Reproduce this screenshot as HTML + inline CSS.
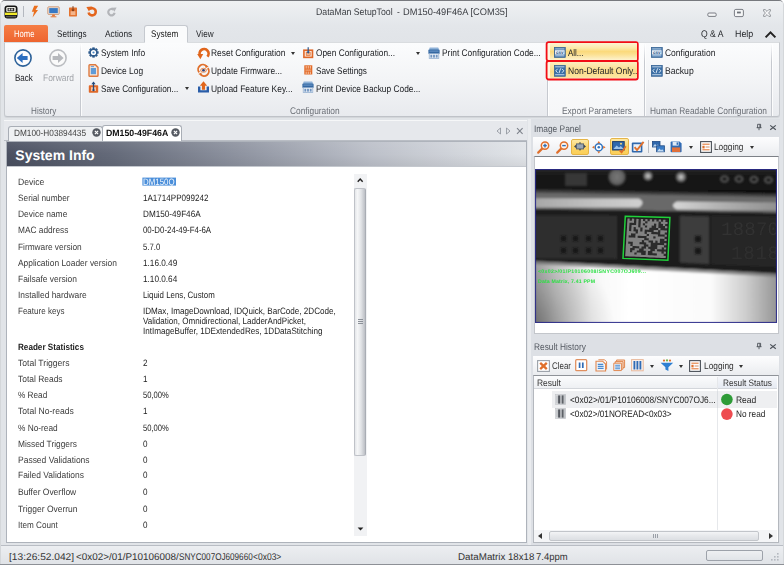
<!DOCTYPE html>
<html>
<head>
<meta charset="utf-8">
<title>DataMan SetupTool - DM150-49F46A [COM35]</title>
<style>
html,body{margin:0;padding:0;}
body{width:784px;height:565px;overflow:hidden;background:#fff;font-family:"Liberation Sans",sans-serif;font-size:10px;color:#333;position:relative;text-rendering:geometricPrecision;}
.abs{position:absolute;}
.t{position:absolute;white-space:nowrap;line-height:12px;transform-origin:0 0;}
.arr{position:absolute;width:0;height:0;border-left:2.5px solid transparent;border-right:2.5px solid transparent;border-top:3px solid #333;}
.sep{position:absolute;top:44px;width:1px;height:72px;background:linear-gradient(rgba(198,201,207,0),#c6c9cf 25%,#c6c9cf 100%);box-shadow:1px 0 0 rgba(255,255,255,.8);}
.hl{box-sizing:border-box;border:1.5px solid #e8141c;background:linear-gradient(#fdf3cf,#fbe08e 45%,#fad56c 55%,#fce9a8);border-radius:1px;}
.dtab{border:1px solid #a9aeb6;border-bottom:none;border-radius:3px 3px 0 0;box-sizing:border-box;}
svg{position:absolute;overflow:visible;}
</style>
</head>
<body>
<div class="abs" style="left:0px;top:0px;width:784px;height:565px;background:#e1e4e8;border-radius:5px 5px 0 0;box-sizing:border-box;border:1px solid #d4d7da;border-top:1px solid #77797e;border-bottom:none;"></div>
<div class="abs" style="left:1px;top:1px;width:782px;height:42px;background:linear-gradient(#eff1f3,#e3e6ea 60%,#e1e4e8);border-radius:4px 4px 0 0;"></div>

<svg class="abs" style="left:4px;top:5px" width="14" height="14" viewBox="0 0 14 14"><rect x=".5" y=".5" width="13" height="13" rx="3" fill="#141414"/><rect x="2.2" y="2" width="9.6" height="5" rx="1.2" fill="#e9e9e2"/><rect x="3.6" y="3" width="6.6" height="3.2" fill="#2a2a2a"/><rect x="4.6" y="3.6" width="1.6" height="1.8" fill="#ddd"/><rect x="7.2" y="3.6" width="1.6" height="1.8" fill="#ddd"/><rect x="1" y="7.6" width="12" height="2.4" fill="#f2ea2a"/><rect x="2" y="10.8" width="10" height="1.6" fill="#5a5a52"/></svg>
<div class="abs" style="left:23px;top:6px;width:1px;height:11px;background:#b4b8bf;"></div>
<svg class="abs" style="left:30px;top:5px" width="10" height="13" viewBox="0 0 10 13"><path d="M4.2 .8 L8.2 .8 L5.6 5 L8 5 L2.6 12.4 L4 6.8 L1.8 6.8 Z" fill="#e96f1e"/></svg>
<svg class="abs" style="left:47px;top:6px" width="13" height="12" viewBox="0 0 13 12"><rect x=".8" y=".8" width="11.4" height="7.6" rx=".8" fill="#eadfd6" stroke="#c98a62" stroke-width=".8"/><rect x="2.2" y="2.1" width="8.6" height="5" fill="#3779c4"/><path d="M5.4 8.6 H7.6 L8.2 10.4 H4.8 Z" fill="#e57a3a"/><rect x="3.6" y="10.3" width="5.8" height="1" fill="#e57a3a"/></svg>
<svg class="abs" style="left:68px;top:6px" width="10" height="11" viewBox="0 0 10 11"><rect x="1" y="1.4" width="8" height="9" rx=".6" fill="#e4732f"/><rect x="2.6" y="5.2" width="4.8" height="3.8" fill="#f3b58c"/><path d="M5 .2 V5" stroke="#7a3a18" stroke-width="1"/><path d="M3.4 3.4 L5 5.4 L6.6 3.4 Z" fill="#7a3a18"/></svg>
<svg class="abs" style="left:86px;top:6px" width="12" height="11" viewBox="0 0 12 11"><path d="M3.6 3.2 A3.6 3.6 0 1 1 2.6 6.4" fill="none" stroke="#e4651c" stroke-width="2.6"/><path d="M.4 1 L5.8 .6 L3 5.4 Z" fill="#e4651c"/></svg>
<svg class="abs" style="left:106px;top:7px" width="11" height="10" viewBox="0 0 11 10"><path d="M7.6 2.8 A3.2 3.2 0 1 0 8.6 5.8" fill="none" stroke="#b3b5b9" stroke-width="2.2"/><path d="M10.6 .6 L5.8 .8 L8.4 4.8 Z" fill="#b3b5b9"/></svg>
<!-- window buttons -->
<svg class="abs" style="left:704px;top:6px" width="72" height="14" viewBox="0 0 72 14"><rect x="3.8" y="7" width="8.4" height="3.4" rx="1.2" fill="#f4f5f6" stroke="#6d7178" stroke-width=".9"/><rect x="30.4" y="3.4" width="9" height="7.2" rx="1.4" fill="#f4f5f6" stroke="#6d7178" stroke-width=".9"/><rect x="33" y="5.6" width="3.8" height="1.8" fill="#6d7178"/><path d="M59.6 3.6 L61.2 3.6 L63 5.4 L64.8 3.6 L66.4 3.6 L66.4 5 L64.6 7 L66.4 9 L66.4 10.4 L64.8 10.4 L63 8.6 L61.2 10.4 L59.6 10.4 L59.6 9 L61.4 7 L59.6 5 Z" fill="#f4f5f6" stroke="#7d8188" stroke-width=".8"/></svg>
<svg class="abs" style="left:764px;top:30px" width="13" height="9" viewBox="0 0 13 9"><path d="M1.6 7.4 L6.5 2.4 L11.4 7.4" fill="none" stroke="#222" stroke-width="2"/></svg>


<div class="t " style="left:316.0px;top:7.2px;font-size:9.6px;color:#3a3d42;transform:scaleX(0.909);">DataMan SetupTool</div>
<div class="t " style="left:396.8px;top:7.2px;font-size:9.6px;color:#3a3d42;transform:scaleX(0.876);">-</div>
<div class="t " style="left:403.0px;top:7.2px;font-size:9.6px;color:#3a3d42;transform:scaleX(0.966);">DM150-49F46A [COM35]</div>
<div class="abs" style="left:4px;top:25px;width:44px;height:17px;background:linear-gradient(#f57d45,#ee6530);border-radius:2px 2px 0 0;"></div>
<div class="t " style="left:14.0px;top:28.6px;font-size:9.6px;color:#fff;transform:scaleX(0.797);">Home</div>
<div class="t " style="left:57.2px;top:28.6px;font-size:9.6px;color:#26282c;transform:scaleX(0.853);">Settings</div>
<div class="t " style="left:105.4px;top:28.6px;font-size:9.6px;color:#26282c;transform:scaleX(0.867);">Actions</div>
<div class="abs" style="left:144px;top:25px;width:44px;height:18px;background:#fafbfc;border:1px solid #c5c9cf;border-bottom:none;border-radius:3px 3px 0 0;box-sizing:border-box;"></div>
<div class="t " style="left:151.3px;top:28.6px;font-size:9.6px;color:#222;transform:scaleX(0.853);">System</div>
<div class="t " style="left:196.4px;top:28.6px;font-size:9.6px;color:#26282c;transform:scaleX(0.853);">View</div>
<div class="t " style="left:701.3px;top:28.6px;font-size:9.6px;color:#26282c;transform:scaleX(0.897);">Q &amp; A</div>
<div class="t " style="left:735.3px;top:28.6px;font-size:9.6px;color:#26282c;transform:scaleX(0.927);">Help</div>
<div class="abs" style="left:4px;top:42px;width:776px;height:75px;background:linear-gradient(#fbfcfd 0,#f3f4f6 50%,#e8eaee 100%);border:1px solid #c6c9ce;border-top:1px solid #d9dcdf;border-bottom:1px solid #bfc2c8;box-sizing:border-box;border-radius:0 0 3px 3px;box-shadow:0 1px 0 #d3d6da;"></div>
<div class="abs" style="left:145px;top:42px;width:42px;height:1px;background:#fafbfc;"></div>
<svg style="left:12.9px;top:48.4px" width="20" height="20" viewBox="0 0 20 20"><circle cx="10" cy="10" r="8.1" fill="#fdfdfe" stroke="#2c6199" stroke-width="1.6"/><path d="M3.8 10 L9.6 5 L9.6 8 L14.6 8 L14.6 12 L9.6 12 L9.6 15 Z" fill="#2d6fc0"/></svg>
<svg style="left:47.5px;top:48.4px" width="20" height="20" viewBox="0 0 20 20"><circle cx="10" cy="10" r="8.1" fill="#fafafa" stroke="#bbbdc1" stroke-width="1.6"/><path d="M15.6 10 L10 5 L10 8 L4.6 8 L4.6 12 L10 12 L10 15 Z" fill="#b7b9bd"/></svg>
<div class="t " style="left:15.0px;top:73.4px;font-size:9.6px;color:#202226;transform:scaleX(0.834);">Back</div>
<div class="t " style="left:43.4px;top:73.4px;font-size:9.6px;color:#a0a3a8;transform:scaleX(0.881);">Forward</div>
<div class="t " style="left:30.6px;top:105.9px;font-size:9.6px;color:#6a6e75;transform:scaleX(0.850);">History</div>
<div class="sep" style="left:80px;"></div>
<div class="t " style="left:101.3px;top:48.4px;font-size:9.6px;color:#202226;transform:scaleX(0.870);">System Info</div>
<div class="t " style="left:101.3px;top:66.4px;font-size:9.6px;color:#202226;transform:scaleX(0.877);">Device Log</div>
<div class="t " style="left:101.3px;top:83.6px;font-size:9.6px;color:#202226;transform:scaleX(0.862);">Save Configuration...</div>
<div class="arr" style="left:185px;top:87px;border-top-color:#333;"></div>
<div class="t " style="left:211.2px;top:48.4px;font-size:9.6px;color:#202226;transform:scaleX(0.878);">Reset Configuration</div>
<div class="arr" style="left:291px;top:52px;border-top-color:#333;"></div>
<div class="t " style="left:211.2px;top:66.4px;font-size:9.6px;color:#202226;transform:scaleX(0.871);">Update Firmware...</div>
<div class="t " style="left:211.2px;top:83.6px;font-size:9.6px;color:#202226;transform:scaleX(0.881);">Upload Feature Key...</div>
<div class="t " style="left:316.3px;top:48.4px;font-size:9.6px;color:#202226;transform:scaleX(0.866);">Open Configuration...</div>
<div class="arr" style="left:416px;top:52px;border-top-color:#333;"></div>
<div class="t " style="left:316.3px;top:66.4px;font-size:9.6px;color:#202226;transform:scaleX(0.861);">Save Settings</div>
<div class="t " style="left:316.3px;top:83.6px;font-size:9.6px;color:#202226;transform:scaleX(0.870);">Print Device Backup Code...</div>
<div class="t " style="left:442.0px;top:48.4px;font-size:9.6px;color:#202226;transform:scaleX(0.873);">Print Configuration Code...</div>
<div class="t " style="left:289.5px;top:105.9px;font-size:9.6px;color:#6a6e75;transform:scaleX(0.870);">Configuration</div>
<div class="abs" style="left:547.5px;top:43px;width:96.5px;height:73px;background:linear-gradient(rgba(255,255,255,.5),rgba(255,255,255,.6));"></div>
<div class="sep" style="left:546.5px;"></div>
<svg style="left:545px;top:40px" width="96" height="42" viewBox="0 0 96 42"><rect x="1.6" y="2.1" width="91.2" height="18.9" rx="2" fill="#fef7e0" stroke="#f20d16" stroke-width="1.8"/><rect x="1.6" y="21" width="91.2" height="18.5" rx="2" fill="#fef7e0" stroke="#f20d16" stroke-width="1.8"/></svg>
<div class="abs" style="left:549.8px;top:43.4px;width:87.2px;height:16.4px;background:linear-gradient(#fdf4d3 0,#fce9a9 30%,#fbda7c 50%,#fbdf8e 65%,#fdf2cd 100%);border-radius:1px;"></div>
<div class="abs" style="left:549.8px;top:62.2px;width:87.2px;height:16.2px;background:linear-gradient(#fdefc0 0,#fbe29a 40%,#fbdc88 60%,#fce6a6 100%);border-radius:1px;"></div>
<div class="t " style="left:567.5px;top:48.4px;font-size:9.6px;color:#202226;transform:scaleX(0.830);">All...</div>
<div class="t " style="left:567.5px;top:66.4px;font-size:9.6px;color:#202226;transform:scaleX(0.888);">Non-Default Only..</div>
<div class="t " style="left:562.0px;top:105.9px;font-size:9.6px;color:#6a6e75;transform:scaleX(0.875);">Export Parameters</div>
<div class="sep" style="left:644px;"></div>
<div class="sep" style="left:771px;"></div>
<div class="t " style="left:665.0px;top:48.4px;font-size:9.6px;color:#202226;transform:scaleX(0.883);">Configuration</div>
<div class="t " style="left:665.0px;top:66.4px;font-size:9.6px;color:#202226;transform:scaleX(0.896);">Backup</div>
<div class="t " style="left:650.0px;top:105.9px;font-size:9.6px;color:#6a6e75;transform:scaleX(0.870);">Human Readable Configuration</div>
<svg style="left:87.8px;top:47px" width="11" height="11" viewBox="0 0 12 12"><g transform="translate(6 6)"><g fill="#2d5a8c"><rect x="-1.3" y="-5.6" width="2.6" height="2.6" transform="rotate(0)" /><rect x="-1.3" y="-5.6" width="2.6" height="2.6" transform="rotate(45)" /><rect x="-1.3" y="-5.6" width="2.6" height="2.6" transform="rotate(90)" /><rect x="-1.3" y="-5.6" width="2.6" height="2.6" transform="rotate(135)" /><rect x="-1.3" y="-5.6" width="2.6" height="2.6" transform="rotate(180)" /><rect x="-1.3" y="-5.6" width="2.6" height="2.6" transform="rotate(225)" /><rect x="-1.3" y="-5.6" width="2.6" height="2.6" transform="rotate(270)" /><rect x="-1.3" y="-5.6" width="2.6" height="2.6" transform="rotate(315)" /></g><circle r="3.7" fill="#fff" stroke="#2d5a8c" stroke-width="1.7"/><circle r="1.2" fill="#4b86c4"/></g></svg>
<svg style="left:87.6px;top:63.8px" width="11" height="13" viewBox="0 0 11 13"><path d="M1 1.6 Q1 .8 1.8 .8 H7.4 L10 3.4 V11.4 Q10 12.2 9.2 12.2 H1.8 Q1 12.2 1 11.4 Z" fill="#f6e4d8" stroke="#dd7a40" stroke-width="1.4"/><rect x="2.8" y="4" width="5.2" height="6.2" fill="#5f9bd8"/><path d="M2.8 2.6 H6" stroke="#5f9bd8" stroke-width="1"/></svg>
<svg style="left:87.6px;top:81.2px" width="11" height="12.5" viewBox="0 0 11 12.5"><rect x=".8" y="4.2" width="9.4" height="7.6" rx=".8" fill="#e0692a"/><rect x="3" y="6.2" width="5" height="3.8" fill="#f5c4a4"/><path d="M5.5 1.6 V9.4" stroke="#24487a" stroke-width="1.3"/><path d="M3.4 3.2 L5.5 .4 L7.6 3.2 Z" fill="#24487a"/><circle cx="5.5" cy="9.2" r="1.1" fill="#24487a"/></svg>
<svg style="left:197px;top:46.6px" width="13" height="12.6" viewBox="0 0 13 12.6"><path d="M3.2 8.8 A4.5 4.5 0 1 1 10.4 9.6" fill="none" stroke="#e0651c" stroke-width="2.7" stroke-linecap="butt"/><path d="M.2 7 L6.2 7 L3.4 12.2 Z" fill="#e0651c"/></svg>
<svg style="left:197px;top:64px" width="13" height="12.5" viewBox="0 0 13 12.5"><path d="M2.2 8.4 A4.7 4.7 0 0 1 9.6 2.4" fill="none" stroke="#e0702c" stroke-width="1.9"/><path d="M10.8 4.2 A4.7 4.7 0 0 1 3.4 10.2" fill="none" stroke="#e0702c" stroke-width="1.9"/><path d="M8.4 .8 L11.6 2.6 L8.6 4.2 Z" fill="#e0702c"/><path d="M4.6 11.8 L1.4 10 L4.4 8.4 Z" fill="#e0702c"/><ellipse cx="6.5" cy="6.3" rx="3" ry="2" fill="#f3d9c6" stroke="#e0702c" stroke-width=".7"/><circle cx="6.5" cy="6.3" r="1.3" fill="#2c3f7a"/></svg>
<svg style="left:198px;top:81.4px" width="11" height="11.6" viewBox="0 0 11 11.6"><path d="M1.2 5.6 V10.4 H9.8 V5.6" fill="none" stroke="#2a5da8" stroke-width="2.4"/><path d="M5.5 8.8 V3.6" stroke="#e0651c" stroke-width="3.2"/><path d="M1.8 4.8 L5.5 .2 L9.2 4.8 Z" fill="#e0651c"/></svg>
<svg style="left:303.2px;top:46.6px" width="10.4" height="11.2" viewBox="0 0 10.4 11.2"><rect x=".9" y="3.2" width="8.6" height="7.2" fill="#f8e6da" stroke="#e0692a" stroke-width="1.6"/><rect x="3.2" y="5.4" width="4" height="3.2" fill="#f1b48e" stroke="#e0692a" stroke-width=".6"/><path d="M5.2 .2 V6" stroke="#2b568c" stroke-width="1.2"/><path d="M3.6 4.6 L5.2 6.8 L6.8 4.6 Z" fill="#2b568c"/></svg>
<svg style="left:303.6px;top:65.2px" width="8.6" height="9.8" viewBox="0 0 8.6 9.8"><rect x=".3" y=".3" width="8" height="9.2" fill="#e26a28"/><g fill="#f3b48e"><rect x="1.6" y="1" width="1.2" height="2.6"/><rect x="3.7" y="1" width="1.2" height="2.6"/><rect x="5.8" y="1" width="1.2" height="2.6"/><rect x="1.4" y="4.6" width="5.8" height="1"/><rect x="1.6" y="6.6" width="1.2" height="2.4"/><rect x="3.7" y="6.6" width="1.2" height="2.4"/><rect x="5.8" y="6.6" width="1.2" height="2.4"/></g></svg>
<svg style="left:302.4px;top:81.4px" width="12" height="12" viewBox="0 0 12 12"><rect x="1.4" y=".6" width="9.2" height="3" rx=".6" fill="#8fb2d8"/><rect x=".4" y="2.6" width="11.2" height="4.4" rx=".8" fill="#3568a2"/><rect x="1.4" y="3.6" width="9.2" height="1" fill="#6f9bcc"/><rect x="1.2" y="6.6" width="9.6" height="5" fill="#e9eff6" stroke="#8aa8cc" stroke-width=".7"/><g fill="#6f93c0"><rect x="2.4" y="7.8" width="1.8" height="2.8"/><rect x="5.1" y="7.8" width="1.8" height="2.8"/><rect x="7.8" y="7.8" width="1.8" height="2.8"/></g></svg>
<svg style="left:427.6px;top:46.6px" width="12" height="12" viewBox="0 0 12 12"><rect x="1.4" y=".6" width="9.2" height="3" rx=".6" fill="#8fb2d8"/><rect x=".4" y="2.6" width="11.2" height="4.4" rx=".8" fill="#3568a2"/><rect x="1.4" y="3.6" width="9.2" height="1" fill="#6f9bcc"/><rect x="1.2" y="6.6" width="9.6" height="5" fill="#e9eff6" stroke="#8aa8cc" stroke-width=".7"/><g fill="#6f93c0"><rect x="2.4" y="7.8" width="1.8" height="2.8"/><rect x="5.1" y="7.8" width="1.8" height="2.8"/><rect x="7.8" y="7.8" width="1.8" height="2.8"/></g></svg>
<svg style="left:553.5px;top:47.3px" width="11.6" height="10.8" viewBox="0 0 11.6 10.8"><rect x=".3" y=".3" width="11" height="10.2" fill="#3a6ea5" stroke="#2c5a8c" stroke-width=".6"/><rect x="1.2" y="1.5" width="9.2" height=".9" fill="#cfe0f0"/><rect x="1.2" y="8.4" width="9.2" height=".9" fill="#cfe0f0"/><rect x="1" y="3.2" width="9.6" height="4.4" fill="#e6eef7"/><text x="5.8" y="7" font-family="Liberation Sans, sans-serif" font-size="4.6" font-weight="bold" fill="#2c5a8c" text-anchor="middle">csv</text></svg>
<svg style="left:553.5px;top:65px" width="11.6" height="11.6" viewBox="0 0 11.6 11.6"><rect x=".3" y=".3" width="11" height="11" fill="#3a6ea5" stroke="#2c5a8c" stroke-width=".6"/><rect x="1.2" y="1.4" width="9.2" height=".9" fill="#cfe0f0"/><rect x="1.2" y="9.3" width="9.2" height=".9" fill="#cfe0f0"/><path d="M3.6 3.8 L1.8 5.8 L3.6 7.8 M8 3.8 L9.8 5.8 L8 7.8 M6.6 3.4 L5 8.2" fill="none" stroke="#d8e6f4" stroke-width="1"/></svg>
<svg style="left:651.4px;top:47.3px" width="11.6" height="10.8" viewBox="0 0 11.6 10.8"><rect x=".3" y=".3" width="11" height="10.2" fill="#3a6ea5" stroke="#2c5a8c" stroke-width=".6"/><rect x="1.2" y="1.5" width="9.2" height=".9" fill="#cfe0f0"/><rect x="1.2" y="8.4" width="9.2" height=".9" fill="#cfe0f0"/><rect x="1" y="3.2" width="9.6" height="4.4" fill="#e6eef7"/><text x="5.8" y="7" font-family="Liberation Sans, sans-serif" font-size="4.6" font-weight="bold" fill="#2c5a8c" text-anchor="middle">csv</text></svg>
<svg style="left:651.4px;top:65px" width="11.6" height="11.6" viewBox="0 0 11.6 11.6"><rect x=".3" y=".3" width="11" height="11" fill="#3a6ea5" stroke="#2c5a8c" stroke-width=".6"/><rect x="1.2" y="1.4" width="9.2" height=".9" fill="#cfe0f0"/><rect x="1.2" y="9.3" width="9.2" height=".9" fill="#cfe0f0"/><path d="M3.6 3.8 L1.8 5.8 L3.6 7.8 M8 3.8 L9.8 5.8 L8 7.8 M6.6 3.4 L5 8.2" fill="none" stroke="#d8e6f4" stroke-width="1"/></svg>
<div class="abs" style="left:4px;top:120px;width:523px;height:20px;background:#e6e8ec;border-top:1px solid #f6f7f8;box-sizing:border-box;"></div>
<div class="abs" style="left:527.5px;top:119px;width:3.5px;height:426px;background:#eaecef;"></div>
<div class="abs" style="left:4px;top:140px;width:523px;height:1px;background:#b9bdc4;"></div>
<div class="abs dtab" style="left:8px;top:126px;width:95px;height:15px;background:#eff1f3;"></div>
<div class="abs dtab" style="left:102px;top:125px;width:80px;height:17px;background:#fff;"></div>
<div class="t " style="left:14.0px;top:127.0px;font-size:9px;color:#444;transform:scaleX(0.917);">DM100-H03894435</div>
<div class="t " style="left:106.4px;top:127.0px;font-size:9px;color:#111;font-weight:bold;transform:scaleX(0.972);">DM150-49F46A</div>
<svg style="left:92px;top:127.8px" width="9" height="9" viewBox="0 0 9 9"><circle cx="4.5" cy="4.5" r="4.2" fill="#555a62"/><path d="M2.9 2.9 L6.1 6.1 M6.1 2.9 L2.9 6.1" stroke="#fff" stroke-width="1.2"/></svg>
<svg style="left:171px;top:127.8px" width="9" height="9" viewBox="0 0 9 9"><circle cx="4.5" cy="4.5" r="4.2" fill="#555a62"/><path d="M2.9 2.9 L6.1 6.1 M6.1 2.9 L2.9 6.1" stroke="#fff" stroke-width="1.2"/></svg>
<svg style="left:494px;top:126px" width="32" height="10" viewBox="0 0 32 10"><path d="M6.5 2 L6.5 8 L3 5 Z M12.5 2 L12.5 8 L16 5 Z" fill="none" stroke="#8a8f98" stroke-width="0.8"/><path d="M23 2.2 L28.6 7.8 M28.6 2.2 L23 7.8" stroke="#7d828b" stroke-width="1.1"/></svg>
<div class="abs" style="left:6px;top:141px;width:521px;height:402px;background:#fff;border:1px solid #aeb3bb;box-sizing:border-box;"></div>
<div class="abs" style="left:7px;top:142px;width:519px;height:25px;background:linear-gradient(90deg,#4a5061 0,#646a79 20%,#8f94a1 45%,#bcc0c9 70%,#e2e5e9 100%);"></div>
<div class="abs" style="left:7px;top:142px;width:519px;height:25px;background:linear-gradient(rgba(255,255,255,.08),rgba(255,255,255,0) 50%,rgba(0,0,0,.06));border-bottom:1px solid #c4c8ce;box-sizing:border-box;"></div>
<div class="t" style="left:15.3px;top:147px;font-size:14px;line-height:17px;font-weight:bold;color:#fff;">System Info</div>
<div class="t " style="left:18.0px;top:176.2px;font-size:9.2px;color:#3a3a3a;transform:scaleX(0.939);">Device</div>
<div class="t " style="left:18.0px;top:192.1px;font-size:9.2px;color:#3a3a3a;transform:scaleX(0.901);">Serial number</div>
<div class="t " style="left:142.7px;top:192.1px;font-size:9.2px;color:#222;transform:scaleX(0.878);">1A1714PP099242</div>
<div class="t " style="left:18.0px;top:208.4px;font-size:9.2px;color:#3a3a3a;transform:scaleX(0.920);">Device name</div>
<div class="t " style="left:142.7px;top:208.4px;font-size:9.2px;color:#222;transform:scaleX(0.889);">DM150-49F46A</div>
<div class="t " style="left:18.0px;top:223.8px;font-size:9.2px;color:#3a3a3a;transform:scaleX(0.904);">MAC address</div>
<div class="t " style="left:142.7px;top:223.8px;font-size:9.2px;color:#222;transform:scaleX(0.855);">00-D0-24-49-F4-6A</div>
<div class="t " style="left:18.0px;top:241.0px;font-size:9.2px;color:#3a3a3a;transform:scaleX(0.903);">Firmware version</div>
<div class="t " style="left:142.7px;top:241.0px;font-size:9.2px;color:#222;transform:scaleX(0.841);">5.7.0</div>
<div class="t " style="left:18.0px;top:256.6px;font-size:9.2px;color:#3a3a3a;transform:scaleX(0.914);">Application Loader version</div>
<div class="t " style="left:142.7px;top:256.6px;font-size:9.2px;color:#222;transform:scaleX(0.894);">1.16.0.49</div>
<div class="t " style="left:18.0px;top:272.8px;font-size:9.2px;color:#3a3a3a;transform:scaleX(0.916);">Failsafe version</div>
<div class="t " style="left:142.7px;top:272.8px;font-size:9.2px;color:#222;transform:scaleX(0.894);">1.10.0.64</div>
<div class="t " style="left:18.0px;top:288.9px;font-size:9.2px;color:#3a3a3a;transform:scaleX(0.915);">Installed hardware</div>
<div class="t " style="left:142.7px;top:288.9px;font-size:9.2px;color:#222;transform:scaleX(0.856);">Liquid Lens, Custom</div>
<div class="t " style="left:18.0px;top:305.0px;font-size:9.2px;color:#3a3a3a;transform:scaleX(0.874);">Feature keys</div>
<div class="t " style="left:142.7px;top:305.0px;font-size:9.2px;color:#222;transform:scaleX(0.882);">IDMax, ImageDownload, IDQuick, BarCode, 2DCode,</div>
<div class="t " style="left:18.0px;top:356.6px;font-size:9.2px;color:#3a3a3a;transform:scaleX(0.934);">Total Triggers</div>
<div class="t " style="left:142.7px;top:356.6px;font-size:9.2px;color:#222;transform:scaleX(0.880);">2</div>
<div class="t " style="left:18.0px;top:372.8px;font-size:9.2px;color:#3a3a3a;transform:scaleX(0.918);">Total Reads</div>
<div class="t " style="left:142.7px;top:372.8px;font-size:9.2px;color:#222;transform:scaleX(0.880);">1</div>
<div class="t " style="left:18.0px;top:389.4px;font-size:9.2px;color:#3a3a3a;transform:scaleX(0.895);">% Read</div>
<div class="t " style="left:142.7px;top:389.4px;font-size:9.2px;color:#222;transform:scaleX(0.827);">50,00%</div>
<div class="t " style="left:18.0px;top:405.3px;font-size:9.2px;color:#3a3a3a;transform:scaleX(0.933);">Total No-reads</div>
<div class="t " style="left:142.7px;top:405.3px;font-size:9.2px;color:#222;transform:scaleX(0.880);">1</div>
<div class="t " style="left:18.0px;top:422.0px;font-size:9.2px;color:#3a3a3a;transform:scaleX(0.905);">% No-read</div>
<div class="t " style="left:142.7px;top:422.0px;font-size:9.2px;color:#222;transform:scaleX(0.827);">50,00%</div>
<div class="t " style="left:18.0px;top:437.5px;font-size:9.2px;color:#3a3a3a;transform:scaleX(0.909);">Missed Triggers</div>
<div class="t " style="left:142.7px;top:437.5px;font-size:9.2px;color:#222;transform:scaleX(0.880);">0</div>
<div class="t " style="left:18.0px;top:453.7px;font-size:9.2px;color:#3a3a3a;transform:scaleX(0.924);">Passed Validations</div>
<div class="t " style="left:142.7px;top:453.7px;font-size:9.2px;color:#222;transform:scaleX(0.880);">0</div>
<div class="t " style="left:18.0px;top:469.4px;font-size:9.2px;color:#3a3a3a;transform:scaleX(0.918);">Failed Validations</div>
<div class="t " style="left:142.7px;top:469.4px;font-size:9.2px;color:#222;transform:scaleX(0.880);">0</div>
<div class="t " style="left:18.0px;top:485.6px;font-size:9.2px;color:#3a3a3a;transform:scaleX(0.922);">Buffer Overflow</div>
<div class="t " style="left:142.7px;top:485.6px;font-size:9.2px;color:#222;transform:scaleX(0.880);">0</div>
<div class="t " style="left:18.0px;top:502.5px;font-size:9.2px;color:#3a3a3a;transform:scaleX(0.923);">Trigger Overrun</div>
<div class="t " style="left:142.7px;top:502.5px;font-size:9.2px;color:#222;transform:scaleX(0.880);">0</div>
<div class="t " style="left:18.0px;top:518.5px;font-size:9.2px;color:#3a3a3a;transform:scaleX(0.885);">Item Count</div>
<div class="t " style="left:142.7px;top:518.5px;font-size:9.2px;color:#222;transform:scaleX(0.880);">0</div>
<svg style="left:142px;top:177px" width="35" height="10"><rect x=".4" y=".6" width="33.6" height="8" fill="#4b8fda"/></svg>
<div class="t " style="left:143.4px;top:175.8px;font-size:9.2px;color:#f4f8fd;transform:scaleX(0.858);">DM150Q</div>
<div class="t " style="left:142.7px;top:315.2px;font-size:9.2px;color:#222;transform:scaleX(0.875);">Validation, Omnidirectional, LadderAndPicket,</div>
<div class="t " style="left:142.7px;top:325.0px;font-size:9.2px;color:#222;transform:scaleX(0.884);">IntImageBuffer, 1DExtendedRes, 1DDataStitching</div>
<div class="t " style="left:18.0px;top:341.0px;font-size:9.2px;color:#222;font-weight:bold;transform:scaleX(0.884);">Reader Statistics</div>
<div class="abs" style="left:354px;top:174px;width:12.5px;height:362px;background:#f1f2f4;"></div>
<div class="abs" style="left:354px;top:188px;width:12px;height:268px;background:linear-gradient(90deg,#e4e6e9,#f5f6f7 25%,#e2e4e7 60%,#bcbfc5);border:1px solid #bfc2c8;border-right-color:#a9adb4;box-sizing:border-box;border-radius:2px;"></div>
<svg style="left:357px;top:178.4px" width="6.4" height="4.6" viewBox="0 0 7 5"><path d="M.8 4 L3.5 1.2 L6.2 4" fill="none" stroke="#222" stroke-width="1.6"/></svg>
<svg style="left:357px;top:527px" width="7" height="4" viewBox="0 0 7 4"><path d="M.6 .6 H6.4 L3.5 3.4 Z" fill="#222"/></svg>
<div class="abs" style="left:357.5px;top:319px;width:5px;height:1px;background:#8b9098;box-shadow:0 2px 0 #8b9098,0 4px 0 #8b9098;"></div>
<div class="abs" style="left:531px;top:119px;width:248.5px;height:426px;background:#dde0e5;"></div>
<div class="t " style="left:534.0px;top:123.9px;font-size:9.6px;color:#555a62;transform:scaleX(0.872);">Image Panel</div>
<svg style="left:756px;top:123px" width="22" height="10" viewBox="0 0 22 10"><path d="M1.6 1.3 H4.6 V4.6 H5.2 M1.6 1.3 V4.6 H.8 M3.9 1.3 V4.6 M.8 4.7 H5.4 M3 4.7 V7.2" stroke="#4d525a" stroke-width="0.9" fill="none"/><path d="M14.2 2.4 L19.8 6.8 M19.8 2.4 L14.2 6.8" stroke="#4d525a" stroke-width="1.2"/></svg>
<div class="abs" style="left:533px;top:137px;width:245.5px;height:19px;background:linear-gradient(#fdfdfe,#f4f5f7 50%,#eaecef);"></div>
<div class="abs" style="left:533.5px;top:156px;width:245px;height:178px;background:#fff;border:1px solid #c3c6cb;border-top-color:#7d8187;box-sizing:border-box;"></div>
<svg class="abs" style="left:535px;top:168.5px;overflow:hidden" width="242" height="154" viewBox="0 0 242 154">
<defs>
<filter id="b1" x="-10%" y="-10%" width="120%" height="120%"><feGaussianBlur stdDeviation="1.1"/></filter>
<filter id="b2" x="-10%" y="-10%" width="120%" height="120%"><feGaussianBlur stdDeviation="0.55"/></filter>
<filter id="b3" x="-20%" y="-20%" width="140%" height="140%"><feGaussianBlur stdDeviation="2.2"/></filter>
<linearGradient id="gTop" x1="0" y1="0" x2="0" y2="1"><stop offset="0" stop-color="#2e2e2e"/><stop offset=".35" stop-color="#181818"/><stop offset="1" stop-color="#0f0f0f"/></linearGradient>
<linearGradient id="gBright" x1="0" y1="0" x2="1" y2="0"><stop offset="0" stop-color="#a4a4a4"/><stop offset=".1" stop-color="#cfcfcf"/><stop offset=".24" stop-color="#f6f6f6"/><stop offset=".4" stop-color="#ffffff"/><stop offset=".72" stop-color="#fbfbfb"/><stop offset=".86" stop-color="#cdcdcd"/><stop offset="1" stop-color="#8e8e8e"/></linearGradient>
<radialGradient id="gShade" gradientUnits="userSpaceOnUse" cx="-5" cy="160" r="85"><stop offset="0" stop-color="#000" stop-opacity=".38"/><stop offset=".5" stop-color="#000" stop-opacity=".16"/><stop offset="1" stop-color="#000" stop-opacity="0"/></radialGradient>
<linearGradient id="gPillR" x1="0" y1="0" x2="1" y2="0"><stop offset="0" stop-color="#d6d6d6"/><stop offset=".4" stop-color="#b4b4b4"/><stop offset="1" stop-color="#8e8e8e"/></linearGradient>
<linearGradient id="gPillL" x1="0" y1="0" x2="1" y2="0"><stop offset="0" stop-color="#a6a6a6"/><stop offset=".6" stop-color="#c2c2c2"/><stop offset="1" stop-color="#d0d0d0"/></linearGradient>
<radialGradient id="gC1"><stop offset="0" stop-color="#787878"/><stop offset=".7" stop-color="#646464"/><stop offset="1" stop-color="#3c3c3c"/></radialGradient>
<radialGradient id="gC2"><stop offset="0" stop-color="#e8e8e8"/><stop offset=".35" stop-color="#9a9a9a"/><stop offset="1" stop-color="#484848"/></radialGradient>
</defs>
<rect width="242" height="154" fill="#1c1c1c"/>
<g filter="url(#b1)">
<rect x="-4" y="-4" width="250" height="31" fill="url(#gTop)"/>
<path d="M-4 23 L246 27.5 L246 44 L-4 40 Z" fill="#696969"/>
<path d="M-4 20.5 L246 25 L246 28 L-4 23.5 Z" fill="#3e3e3e"/>
<path d="M-4 29.3 L104 29.6 Q111 34 104 38.4 L-4 38.4 Z" fill="url(#gPillL)"/>
<path d="M142 32.6 L246 33.5 L246 41.5 L142 40.6 Q134 36.5 142 32.6 Z" fill="url(#gPillR)"/>
<path d="M-4 40 L246 44 L246 106 L-4 93 Z" fill="#1f1f1f"/>
<path d="M-4 46 L82 47 L82 90 L-4 89 Z" fill="#2e2e2e"/>
<path d="M145 47 L174 47.5 L174 95 L145 93.5 Z" fill="#3d3d3d"/>
<path d="M176 47 L246 48 L246 98 L176 95 Z" fill="#282828"/>
<path d="M-4 92 L246 105 L246 160 L-4 160 Z" fill="url(#gBright)"/>
<path d="M-4 92 L246 105 L246 160 L-4 160 Z" fill="url(#gShade)"/>
<path d="M-4 92 L246 105 L246 108 L-4 95 Z" fill="#6a6a6a" opacity=".7"/>
</g>
<g filter="url(#b1)">
<circle cx="82" cy="8" r="9" fill="url(#gC1)"/>
<circle cx="113" cy="7" r="5" fill="url(#gC2)"/>
<circle cx="146" cy="8" r="5.5" fill="url(#gC2)"/>
<g fill="none" stroke="#555" stroke-width="2"><ellipse cx="189.5" cy="10" rx="3.5" ry="2.8"/><ellipse cx="204" cy="10" rx="3.5" ry="2.8"/><ellipse cx="219" cy="10.5" rx="3.5" ry="2.8"/><ellipse cx="233.5" cy="11" rx="3.5" ry="2.8"/></g>
<g fill="#3a3a3a" opacity=".9"><rect x="30" y="4" width="22" height="13"/></g>
<g fill="#171717"><rect x="26" y="67" width="5" height="5"/><rect x="38" y="67" width="5" height="5"/><rect x="51" y="67" width="5" height="5"/><rect x="63" y="67" width="5" height="5"/><rect x="26" y="79" width="5" height="5"/><rect x="38" y="79" width="5" height="5"/><rect x="51" y="79" width="5" height="5"/><rect x="63" y="79" width="5" height="5"/><rect x="160" y="67" width="6" height="6"/><rect x="160" y="79" width="6" height="6"/></g>
</g>
<path d="M92.5 49.5L132.7 50.8L130.7 89.1L90.2 87.2Z" fill="#2b2b2b"/>
<g filter="url(#b2)"><path d="M92.5 49.5L94.7 49.6L94.6 51.7L92.4 51.6ZM97.0 49.6L99.2 49.7L99.1 51.8L96.8 51.7ZM101.4 49.8L103.7 49.9L103.5 52.0L101.3 51.9ZM105.9 49.9L108.1 50.0L108.0 52.1L105.8 52.0ZM110.4 50.1L112.6 50.2L112.5 52.3L110.2 52.2ZM114.8 50.2L117.1 50.3L116.9 52.4L114.7 52.3ZM119.3 50.4L121.5 50.4L121.4 52.6L119.2 52.5ZM123.8 50.5L126.0 50.6L125.9 52.7L123.7 52.6ZM128.2 50.7L130.5 50.7L130.4 52.9L128.1 52.8ZM92.4 51.6L94.6 51.7L94.5 53.8L92.2 53.7ZM94.6 51.7L96.8 51.7L96.7 53.8L94.5 53.8ZM96.8 51.7L99.1 51.8L98.9 53.9L96.7 53.8ZM101.3 51.9L103.5 52.0L103.4 54.1L101.2 54.0ZM105.8 52.0L108.0 52.1L107.9 54.2L105.7 54.1ZM108.0 52.1L110.2 52.2L110.1 54.3L107.9 54.2ZM112.5 52.3L114.7 52.3L114.6 54.4L112.4 54.4ZM114.7 52.3L116.9 52.4L116.8 54.5L114.6 54.4ZM116.9 52.4L119.2 52.5L119.1 54.6L116.8 54.5ZM119.2 52.5L121.4 52.6L121.3 54.7L119.1 54.6ZM121.4 52.6L123.7 52.6L123.5 54.8L121.3 54.7ZM125.9 52.7L128.1 52.8L128.0 54.9L125.8 54.8ZM128.1 52.8L130.4 52.9L130.2 55.0L128.0 54.9ZM130.4 52.9L132.6 52.9L132.5 55.1L130.2 55.0ZM92.2 53.7L94.5 53.8L94.4 55.9L92.1 55.8ZM101.2 54.0L103.4 54.1L103.3 56.2L101.1 56.1ZM105.7 54.1L107.9 54.2L107.8 56.3L105.5 56.3ZM110.1 54.3L112.4 54.4L112.2 56.5L110.0 56.4ZM112.4 54.4L114.6 54.4L114.5 56.6L112.2 56.5ZM114.6 54.4L116.8 54.5L116.7 56.6L114.5 56.6ZM116.8 54.5L119.1 54.6L118.9 56.7L116.7 56.6ZM121.3 54.7L123.5 54.8L123.4 56.9L121.2 56.8ZM128.0 54.9L130.2 55.0L130.1 57.1L127.9 57.0ZM92.1 55.8L94.4 55.9L94.2 58.0L92.0 57.9ZM96.6 55.9L98.8 56.0L98.7 58.1L96.5 58.0ZM98.8 56.0L101.1 56.1L100.9 58.2L98.7 58.1ZM101.1 56.1L103.3 56.2L103.2 58.3L100.9 58.2ZM105.5 56.3L107.8 56.3L107.6 58.4L105.4 58.4ZM107.8 56.3L110.0 56.4L109.9 58.5L107.6 58.4ZM112.2 56.5L114.5 56.6L114.4 58.7L112.1 58.6ZM114.5 56.6L116.7 56.6L116.6 58.8L114.4 58.7ZM121.2 56.8L123.4 56.9L123.3 59.0L121.1 58.9ZM130.1 57.1L132.4 57.2L132.3 59.3L130.0 59.2ZM92.0 57.9L94.2 58.0L94.1 60.1L91.9 60.0ZM96.5 58.0L98.7 58.1L98.6 60.2L96.3 60.1ZM100.9 58.2L103.2 58.3L103.1 60.4L100.8 60.3ZM103.2 58.3L105.4 58.4L105.3 60.5L103.1 60.4ZM107.6 58.4L109.9 58.5L109.8 60.6L107.5 60.5ZM109.9 58.5L112.1 58.6L112.0 60.7L109.8 60.6ZM112.1 58.6L114.4 58.7L114.2 60.8L112.0 60.7ZM123.3 59.0L125.5 59.1L125.4 61.2L123.2 61.1ZM91.9 60.0L94.1 60.1L94.0 62.1L91.7 62.1ZM96.3 60.1L98.6 60.2L98.4 62.3L96.2 62.2ZM103.1 60.4L105.3 60.5L105.2 62.6L102.9 62.5ZM107.5 60.5L109.8 60.6L109.6 62.7L107.4 62.6ZM118.7 61.0L121.0 61.0L120.8 63.1L118.6 63.1ZM121.0 61.0L123.2 61.1L123.1 63.2L120.8 63.1ZM125.4 61.2L127.7 61.3L127.6 63.4L125.3 63.3ZM127.7 61.3L129.9 61.4L129.8 63.5L127.6 63.4ZM129.9 61.4L132.1 61.4L132.0 63.6L129.8 63.5ZM91.7 62.1L94.0 62.1L93.8 64.2L91.6 64.2ZM94.0 62.1L96.2 62.2L96.1 64.3L93.8 64.2ZM96.2 62.2L98.4 62.3L98.3 64.4L96.1 64.3ZM98.4 62.3L100.7 62.4L100.6 64.5L98.3 64.4ZM102.9 62.5L105.2 62.6L105.0 64.7L102.8 64.6ZM105.2 62.6L107.4 62.6L107.3 64.8L105.0 64.7ZM107.4 62.6L109.6 62.7L109.5 64.8L107.3 64.8ZM111.9 62.8L114.1 62.9L114.0 65.0L111.8 64.9ZM114.1 62.9L116.4 63.0L116.2 65.1L114.0 65.0ZM125.3 63.3L127.6 63.4L127.4 65.5L125.2 65.4ZM127.6 63.4L129.8 63.5L129.7 65.6L127.4 65.5ZM91.6 64.2L93.8 64.2L93.7 66.3L91.5 66.3ZM93.8 64.2L96.1 64.3L96.0 66.4L93.7 66.3ZM100.6 64.5L102.8 64.6L102.7 66.7L100.4 66.6ZM102.8 64.6L105.0 64.7L104.9 66.8L102.7 66.7ZM105.0 64.7L107.3 64.8L107.2 66.9L104.9 66.8ZM107.3 64.8L109.5 64.8L109.4 67.0L107.2 66.9ZM109.5 64.8L111.8 64.9L111.6 67.0L109.4 67.0ZM114.0 65.0L116.2 65.1L116.1 67.2L113.9 67.1ZM116.2 65.1L118.5 65.2L118.4 67.3L116.1 67.2ZM118.5 65.2L120.7 65.3L120.6 67.4L118.4 67.3ZM120.7 65.3L123.0 65.4L122.8 67.5L120.6 67.4ZM129.7 65.6L131.9 65.7L131.8 67.8L129.6 67.7ZM91.5 66.3L93.7 66.3L93.6 68.4L91.3 68.3ZM100.4 66.6L102.7 66.7L102.6 68.8L100.3 68.7ZM111.6 67.0L113.9 67.1L113.8 69.2L111.5 69.2ZM113.9 67.1L116.1 67.2L116.0 69.3L113.8 69.2ZM116.1 67.2L118.4 67.3L118.2 69.4L116.0 69.3ZM120.6 67.4L122.8 67.5L122.7 69.6L120.5 69.5ZM122.8 67.5L125.1 67.6L125.0 69.7L122.7 69.6ZM125.1 67.6L127.3 67.6L127.2 69.8L125.0 69.7ZM127.3 67.6L129.6 67.7L129.5 69.9L127.2 69.8ZM91.3 68.3L93.6 68.4L93.5 70.5L91.2 70.4ZM93.6 68.4L95.8 68.5L95.7 70.6L93.5 70.5ZM95.8 68.5L98.1 68.6L97.9 70.7L95.7 70.6ZM98.1 68.6L100.3 68.7L100.2 70.8L97.9 70.7ZM100.3 68.7L102.6 68.8L102.4 70.9L100.2 70.8ZM102.6 68.8L104.8 68.9L104.7 71.0L102.4 70.9ZM104.8 68.9L107.0 69.0L106.9 71.1L104.7 71.0ZM107.0 69.0L109.3 69.1L109.2 71.2L106.9 71.1ZM113.8 69.2L116.0 69.3L115.9 71.4L113.6 71.4ZM116.0 69.3L118.2 69.4L118.1 71.5L115.9 71.4ZM118.2 69.4L120.5 69.5L120.4 71.6L118.1 71.5ZM120.5 69.5L122.7 69.6L122.6 71.7L120.4 71.6ZM122.7 69.6L125.0 69.7L124.9 71.8L122.6 71.7ZM129.5 69.9L131.7 70.0L131.6 72.1L129.3 72.0ZM91.2 70.4L93.5 70.5L93.3 72.6L91.1 72.5ZM93.5 70.5L95.7 70.6L95.6 72.7L93.3 72.6ZM95.7 70.6L97.9 70.7L97.8 72.8L95.6 72.7ZM97.9 70.7L100.2 70.8L100.1 72.9L97.8 72.8ZM100.2 70.8L102.4 70.9L102.3 73.0L100.1 72.9ZM102.4 70.9L104.7 71.0L104.6 73.1L102.3 73.0ZM104.7 71.0L106.9 71.1L106.8 73.2L104.6 73.1ZM109.2 71.2L111.4 71.3L111.3 73.4L109.0 73.3ZM111.4 71.3L113.6 71.4L113.5 73.5L111.3 73.4ZM118.1 71.5L120.4 71.6L120.3 73.7L118.0 73.7ZM122.6 71.7L124.9 71.8L124.7 73.9L122.5 73.8ZM91.1 72.5L93.3 72.6L93.2 74.7L91.0 74.6ZM97.8 72.8L100.1 72.9L99.9 75.0L97.7 74.9ZM100.1 72.9L102.3 73.0L102.2 75.1L99.9 75.0ZM102.3 73.0L104.6 73.1L104.4 75.2L102.2 75.1ZM111.3 73.4L113.5 73.5L113.4 75.6L111.2 75.5ZM113.5 73.5L115.8 73.6L115.7 75.7L113.4 75.6ZM129.2 74.1L131.5 74.2L131.4 76.3L129.1 76.2ZM91.0 74.6L93.2 74.7L93.1 76.8L90.8 76.7ZM93.2 74.7L95.5 74.8L95.3 76.9L93.1 76.8ZM97.7 74.9L99.9 75.0L99.8 77.1L97.6 77.0ZM99.9 75.0L102.2 75.1L102.1 77.2L99.8 77.1ZM102.2 75.1L104.4 75.2L104.3 77.3L102.1 77.2ZM104.4 75.2L106.7 75.3L106.6 77.4L104.3 77.3ZM106.7 75.3L108.9 75.4L108.8 77.5L106.6 77.4ZM113.4 75.6L115.7 75.7L115.5 77.8L113.3 77.7ZM122.4 76.0L124.6 76.0L124.5 78.2L122.3 78.1ZM124.6 76.0L126.9 76.1L126.8 78.3L124.5 78.2ZM126.9 76.1L129.1 76.2L129.0 78.4L126.8 78.3ZM90.8 76.7L93.1 76.8L93.0 78.9L90.7 78.8ZM93.1 76.8L95.3 76.9L95.2 79.0L93.0 78.9ZM95.3 76.9L97.6 77.0L97.4 79.1L95.2 79.0ZM104.3 77.3L106.6 77.4L106.4 79.5L104.2 79.4ZM111.0 77.6L113.3 77.7L113.2 79.8L110.9 79.7ZM122.3 78.1L124.5 78.2L124.4 80.3L122.2 80.2ZM124.5 78.2L126.8 78.3L126.7 80.4L124.4 80.3ZM129.0 78.4L131.3 78.5L131.1 80.6L128.9 80.5ZM90.7 78.8L93.0 78.9L92.8 81.0L90.6 80.9ZM93.0 78.9L95.2 79.0L95.1 81.1L92.8 81.0ZM99.7 79.2L101.9 79.3L101.8 81.4L99.6 81.3ZM101.9 79.3L104.2 79.4L104.1 81.5L101.8 81.4ZM108.7 79.6L110.9 79.7L110.8 81.8L108.6 81.7ZM110.9 79.7L113.2 79.8L113.1 81.9L110.8 81.8ZM113.2 79.8L115.4 79.9L115.3 82.0L113.1 81.9ZM119.9 80.1L122.2 80.2L122.0 82.3L119.8 82.2ZM90.6 80.9L92.8 81.0L92.7 83.1L90.5 83.0ZM92.8 81.0L95.1 81.1L95.0 83.2L92.7 83.1ZM97.3 81.2L99.6 81.3L99.4 83.4L97.2 83.3ZM99.6 81.3L101.8 81.4L101.7 83.5L99.4 83.4ZM110.8 81.8L113.1 81.9L112.9 84.0L110.7 83.9ZM117.5 82.1L119.8 82.2L119.7 84.3L117.4 84.2ZM119.8 82.2L122.0 82.3L121.9 84.4L119.7 84.3ZM122.0 82.3L124.3 82.4L124.2 84.5L121.9 84.4ZM124.3 82.4L126.5 82.5L126.4 84.6L124.2 84.5ZM128.8 82.6L131.0 82.7L130.9 84.8L128.7 84.7ZM90.5 83.0L92.7 83.1L92.6 85.2L90.3 85.1ZM92.7 83.1L95.0 83.2L94.8 85.3L92.6 85.2ZM95.0 83.2L97.2 83.3L97.1 85.4L94.8 85.3ZM97.2 83.3L99.4 83.4L99.3 85.5L97.1 85.4ZM101.7 83.5L103.9 83.6L103.8 85.7L101.6 85.6ZM103.9 83.6L106.2 83.7L106.1 85.8L103.8 85.7ZM110.7 83.9L112.9 84.0L112.8 86.1L110.6 86.0ZM121.9 84.4L124.2 84.5L124.1 86.7L121.8 86.6ZM124.2 84.5L126.4 84.6L126.3 86.8L124.1 86.7ZM126.4 84.6L128.7 84.7L128.6 86.9L126.3 86.8ZM90.3 85.1L92.6 85.2L92.5 87.3L90.2 87.2ZM92.6 85.2L94.8 85.3L94.7 87.4L92.5 87.3ZM94.8 85.3L97.1 85.4L97.0 87.5L94.7 87.4ZM97.1 85.4L99.3 85.5L99.2 87.6L97.0 87.5ZM99.3 85.5L101.6 85.6L101.5 87.7L99.2 87.6ZM101.6 85.6L103.8 85.7L103.7 87.8L101.5 87.7ZM103.8 85.7L106.1 85.8L106.0 87.9L103.7 87.8ZM106.1 85.8L108.3 85.9L108.2 88.0L106.0 87.9ZM108.3 85.9L110.6 86.0L110.4 88.1L108.2 88.0ZM110.6 86.0L112.8 86.1L112.7 88.3L110.4 88.1ZM112.8 86.1L115.1 86.2L114.9 88.4L112.7 88.3ZM115.1 86.2L117.3 86.3L117.2 88.5L114.9 88.4ZM117.3 86.3L119.6 86.5L119.4 88.6L117.2 88.5ZM119.6 86.5L121.8 86.6L121.7 88.7L119.4 88.6ZM121.8 86.6L124.1 86.7L123.9 88.8L121.7 88.7ZM124.1 86.7L126.3 86.8L126.2 88.9L123.9 88.8ZM126.3 86.8L128.6 86.9L128.4 89.0L126.2 88.9ZM128.6 86.9L130.8 87.0L130.7 89.1L128.4 89.0Z" fill="#828282"/></g>
<text x="186" y="66" font-family="Liberation Mono, monospace" font-size="19" fill="#303030" filter="url(#b2)" textLength="58">18870</text>
<text x="196" y="90" font-family="Liberation Mono, monospace" font-size="19" fill="#2f2f2f" filter="url(#b2)" textLength="48">1818</text>
<path d="M90.3 47.3L134.9 48.6L132.9 91.3L88.0 89.4Z" fill="none" stroke="#1fd13a" stroke-width="1.5"/>
<g font-family="Liberation Sans, sans-serif" font-size="5.2" fill="#2be043" font-weight="bold" filter="url(#b2)">
<text x="3" y="103.5" textLength="108">&lt;0x02&gt;/01/P10106008/SNYC007OJ609...</text>
<text x="3" y="114" textLength="57">Data Matrix, 7.41 PPM</text>
</g>
<rect x=".5" y=".5" width="241" height="153" fill="none" stroke="#2a2a8a" stroke-width="1.2" stroke-opacity=".9"/>
</svg>
<div class="t " style="left:714.0px;top:142.1px;font-size:9.6px;color:#333;transform:scaleX(0.863);">Logging</div>
<div class="arr" style="left:689px;top:146px;border-top-color:#333;"></div>
<div class="arr" style="left:749.7px;top:146px;border-top-color:#333;"></div>
<div class="abs" style="left:647.5px;top:140px;width:1px;height:13px;background:#b9bdc4;"></div>
<div class="t " style="left:534.0px;top:342.2px;font-size:9.6px;color:#555a62;transform:scaleX(0.870);">Result History</div>
<svg style="left:756px;top:342px" width="22" height="10" viewBox="0 0 22 10"><path d="M1.6 1.3 H4.6 V4.6 H5.2 M1.6 1.3 V4.6 H.8 M3.9 1.3 V4.6 M.8 4.7 H5.4 M3 4.7 V7.2" stroke="#4d525a" stroke-width="0.9" fill="none"/><path d="M14.2 2.4 L19.8 6.8 M19.8 2.4 L14.2 6.8" stroke="#4d525a" stroke-width="1.2"/></svg>
<div class="abs" style="left:533px;top:356px;width:245.5px;height:19px;background:linear-gradient(#fdfdfe,#f4f5f7 50%,#eaecef);"></div>
<div class="t " style="left:551.8px;top:360.8px;font-size:9.6px;color:#333;transform:scaleX(0.828);">Clear</div>
<div class="t " style="left:704.0px;top:360.8px;font-size:9.6px;color:#333;transform:scaleX(0.869);">Logging</div>
<div class="arr" style="left:650px;top:364.5px;border-top-color:#333;"></div>
<div class="arr" style="left:679px;top:364.5px;border-top-color:#333;"></div>
<div class="arr" style="left:738.5px;top:364.5px;border-top-color:#333;"></div>
<div class="abs" style="left:533px;top:375px;width:245.5px;height:168px;background:#fff;border:1px solid #b4b8be;border-top-color:#8f9399;box-sizing:border-box;"></div>
<div class="abs" style="left:534px;top:376px;width:243px;height:13px;background:linear-gradient(#fbfcfd,#eef0f3);border-bottom:1px solid #d3d6db;box-sizing:border-box;"></div>
<div class="abs" style="left:718px;top:376px;width:59px;height:12px;background:linear-gradient(#f6f8fb,#e6eaf2);"></div>
<div class="abs" style="left:717px;top:377px;width:1px;height:153px;background:#e6e8eb;"></div>
<div class="t " style="left:536.8px;top:377.0px;font-size:9.4px;color:#333;transform:scaleX(0.897);">Result</div>
<div class="t " style="left:723.0px;top:377.0px;font-size:9.4px;color:#333;transform:scaleX(0.877);">Result Status</div>
<div class="abs" style="left:552px;top:391px;width:225px;height:16.5px;background:#eeeff1;"></div>
<div class="abs" style="left:717px;top:391px;width:1px;height:16.5px;background:#dcdfe3;"></div>
<div class="t " style="left:569.8px;top:394.3px;font-size:9.4px;color:#222;transform:scaleX(0.887);">&lt;0x02&gt;/01/P10106008/SNYC007OJ6...</div>
<div class="t " style="left:569.8px;top:408.4px;font-size:9.4px;color:#222;transform:scaleX(0.878);">&lt;0x02&gt;/01NOREAD&lt;0x03&gt;</div>
<svg style="left:720px;top:393px" width="14" height="28" viewBox="0 0 14 28"><circle cx="6.9" cy="6.5" r="5.8" fill="#2e9b37"/><circle cx="6.9" cy="21.1" r="5.8" fill="#ee4b50"/></svg>
<div class="t " style="left:736.3px;top:394.3px;font-size:9.4px;color:#222;transform:scaleX(0.903);">Read</div>
<div class="t " style="left:736.3px;top:408.4px;font-size:9.4px;color:#222;transform:scaleX(0.879);">No read</div>
<div class="abs" style="left:534px;top:530px;width:243px;height:12px;background:#f4f5f7;"></div>
<div class="abs" style="left:549px;top:531px;width:210px;height:10px;background:linear-gradient(#f3f4f6,#e6e8eb 50%,#dcdfe3);border:1px solid #c2c5ca;box-sizing:border-box;border-radius:2px;"></div>
<div class="abs" style="left:538px;top:533px;width:0px;height:0px;border-top:3px solid transparent;border-bottom:3px solid transparent;border-right:4px solid #333;"></div>
<div class="abs" style="left:769px;top:533px;width:0px;height:0px;border-top:3px solid transparent;border-bottom:3px solid transparent;border-left:4px solid #333;"></div>
<div class="abs" style="left:653px;top:534px;width:1px;height:4px;background:#9a9fa7;box-shadow:2px 0 0 #9a9fa7,4px 0 0 #9a9fa7;"></div>
<div class="abs" style="left:1px;top:545px;width:782px;height:19px;background:linear-gradient(#eceef1,#e0e3e7);border-top:1px solid #b9bdc4;box-sizing:border-box;"></div>
<div class="abs" style="left:0px;top:564px;width:784px;height:1px;background:#8d9096;"></div>
<div class="t " style="left:8.6px;top:551.6px;font-size:9.8px;color:#333;transform:scaleX(1.039);">[13:26:52.042]</div>
<div class="t " style="left:75.6px;top:551.6px;font-size:9.8px;color:#333;transform:scaleX(1.008);">&lt;0x02&gt;/01/P10106008/</div>
<div class="t " style="left:179.2px;top:551.6px;font-size:9.8px;color:#333;transform:scaleX(0.830);">SNYC007OJ609660</div>
<div class="t " style="left:253.3px;top:551.6px;font-size:9.8px;color:#333;transform:scaleX(0.866);">&lt;0x03&gt;</div>
<div class="t " style="left:458.4px;top:551.6px;font-size:9.8px;color:#333;transform:scaleX(1.001);">DataMatrix</div>
<div class="t " style="left:508.0px;top:551.6px;font-size:9.8px;color:#333;transform:scaleX(0.985);">18x18</div>
<div class="t " style="left:535.7px;top:551.6px;font-size:9.8px;color:#333;transform:scaleX(0.967);">7.4ppm</div>
<div class="abs" style="left:706px;top:550px;width:57px;height:11px;border:1px solid #9da2aa;border-radius:2px;box-sizing:border-box;background:linear-gradient(#eef0f2,#e1e4e8);"></div>
<svg style="left:770px;top:552px" width="11" height="11" viewBox="0 0 11 11"><g fill="#b4b8bf"><rect x="7" y="1" width="1.6" height="1.6"/><rect x="4" y="4" width="1.6" height="1.6"/><rect x="7" y="4" width="1.6" height="1.6"/><rect x="1" y="7" width="1.6" height="1.6"/><rect x="4" y="7" width="1.6" height="1.6"/><rect x="7" y="7" width="1.6" height="1.6"/></g></svg>
<svg style="left:537px;top:141.2px" width="13" height="12.5" viewBox="0 0 13 12.5"><path d="M5.4 7.4 L1.2 11.6" stroke="#e0702c" stroke-width="2.2" stroke-linecap="round"/><circle cx="8" cy="4.6" r="3.7" fill="#fdf4ee" stroke="#e0702c" stroke-width="1.5"/><path d="M6.2 4.6 H9.8" stroke="#2f6fb5" stroke-width="1.4"/><path d="M8 2.8 V6.4" stroke="#2f6fb5" stroke-width="1.4"/></svg>
<svg style="left:556px;top:141.2px" width="13" height="12.5" viewBox="0 0 13 12.5"><path d="M5.4 7.4 L1.2 11.6" stroke="#e0702c" stroke-width="2.2" stroke-linecap="round"/><circle cx="8" cy="4.6" r="3.7" fill="#fdf4ee" stroke="#e0702c" stroke-width="1.5"/><path d="M6.2 4.6 H9.8" stroke="#2f6fb5" stroke-width="1.4"/></svg>
<div class="abs" style="left:571px;top:138.5px;width:18px;height:16px;background:linear-gradient(#fde9a6,#fbd56a 50%,#fbcf58);border:1px solid #e5b548;border-radius:2px;box-sizing:border-box;"></div>
<svg style="left:574px;top:142px" width="12" height="9" viewBox="0 0 12 9"><rect x="2" y="1.4" width="8" height="6" fill="#5b6570"/><rect x="3" y="2.4" width="6" height="4" fill="#9aa7b4"/><path d="M0 4.4 L2 2.8 V6 Z M12 4.4 L10 2.8 V6 Z M6 0 L4.6 1.6 H7.4 Z M6 8.8 L4.6 7.2 H7.4 Z" fill="#3c4855"/></svg>
<svg style="left:592px;top:141.2px" width="13.6" height="12.6" viewBox="0 0 13.6 12.6"><circle cx="6.8" cy="6.3" r="3.6" fill="#fff" stroke="#2f74c0" stroke-width="1.5"/><circle cx="6.8" cy="6.3" r="1.3" fill="#2f74c0"/><path d="M0 6.3 L2.4 4.8 V7.8 Z M13.6 6.3 L11.2 4.8 V7.8 Z M6.8 0 L5.3 2.2 H8.3 Z M6.8 12.6 L5.3 10.4 H8.3 Z" fill="#e0702c"/></svg>
<div class="abs" style="left:609.5px;top:138px;width:19.5px;height:16.5px;background:linear-gradient(#fde9a6,#fbd56a 50%,#fbcf58);border:1px solid #e5b548;border-radius:2px;box-sizing:border-box;"></div>
<svg style="left:612px;top:140.6px" width="15" height="12" viewBox="0 0 15 12"><rect x=".6" y=".6" width="11.6" height="8.4" fill="#2f68ad" stroke="#1f3f6c" stroke-width="1"/><path d="M1.4 8 L4.6 4.4 L7 6.6 L8.8 5 L11.6 8 Z" fill="#9cc3ea"/><circle cx="9" cy="2.8" r="1" fill="#f4d77a"/><path d="M7.4 9.2 L9.6 11.4 L13.8 5.2" fill="none" stroke="#e0702c" stroke-width="1.7"/></svg>
<svg style="left:631px;top:141px" width="14" height="12.6" viewBox="0 0 14 12.6"><rect x=".8" y="1.6" width="10.6" height="10" rx="1" fill="#2f68ad"/><rect x="2.4" y="3.2" width="7.4" height="6.8" fill="#e9f0f8"/><path d="M3.6 6.2 L6 9 L12.6 .8" fill="none" stroke="#e0702c" stroke-width="1.9"/></svg>
<svg style="left:652px;top:141.2px" width="13" height="11.4" viewBox="0 0 13 11.4"><rect x=".4" y=".4" width="7.6" height="5.6" fill="#2f68ad" stroke="#234e86" stroke-width=".8"/><path d="M.8 5.4 L3 3 L4.6 4.4 L5.8 3.4 L7.6 5.4 Z" fill="#b9d4ee"/><rect x="4.6" y="4.8" width="7.8" height="6" fill="#3b7cc6" stroke="#234e86" stroke-width=".8"/><path d="M5 10.4 L7.4 7.6 L9 9.2 L10.2 8.2 L12 10.4 Z" fill="#c6dcf1"/></svg>
<svg style="left:670.4px;top:141.2px" width="12.2" height="11.8" viewBox="0 0 12.2 11.8"><path d="M.6 1.4 Q.6 .6 1.4 .6 H9.6 L11.6 2.6 V10.4 Q11.6 11.2 10.8 11.2 H1.4 Q.6 11.2 .6 10.4 Z" fill="#2f6bb5"/><rect x="2.6" y=".8" width="6" height="3.8" fill="#dfe9f5"/><rect x="6.6" y="1.4" width="1.4" height="2.4" fill="#2f6bb5"/><rect x="2" y="6.4" width="8.2" height="4.6" fill="#e0703a"/></svg>
<svg style="left:700.3px;top:140.8px" width="12" height="12" viewBox="0 0 12 12"><rect x=".6" y=".6" width="10.8" height="10.8" fill="#fdfdfd" stroke="#4a5058" stroke-width="1.1"/><path d="M2.4 3.2 H9.6 M2.4 8.8 H9.6" stroke="#e0702c" stroke-width="1"/><rect x="2.4" y="4.8" width="2.2" height="2.6" fill="#e0702c"/><path d="M5.6 6 H9.6" stroke="#c9855c" stroke-width=".9"/></svg>
<svg style="left:537px;top:359.6px" width="13" height="12" viewBox="0 0 13 12"><rect x=".6" y=".6" width="11.8" height="10.8" fill="#fff" stroke="#9aa0a8" stroke-width="1.1"/><path d="M3.2 2.8 L9.8 9.2 M9.8 2.8 L3.2 9.2" stroke="#e0702c" stroke-width="2.3"/></svg>
<svg style="left:575px;top:359px" width="12.4" height="12.4" viewBox="0 0 12.4 12.4"><rect x=".7" y=".7" width="11" height="11" rx="1" fill="#fff" stroke="#e09060" stroke-width="1.3"/><path d="M4.6 3.4 V9 M7.8 3.4 V9" stroke="#2f6bb5" stroke-width="1.7"/></svg>
<svg style="left:594.6px;top:359px" width="12.2" height="12.6" viewBox="0 0 12.2 12.6"><path d="M1 2.2 H7.6 L10.6 5 V12 H1 Z" fill="#eef4fb" stroke="#e08850" stroke-width="1.1"/><path d="M3.4 .8 H9.6 L11.6 2.8 V10.4" fill="none" stroke="#e08850" stroke-width="1"/><path d="M2.8 5.4 H8.2 M2.8 7.4 H8.6 M2.8 9.4 H8.6" stroke="#4a8ad0" stroke-width="1.1"/></svg>
<svg style="left:612.8px;top:359.4px" width="13" height="12.2" viewBox="0 0 13 12.2"><path d="M3.6 1 H11.6 V8.6 H3.6 Z" fill="#f7dcc8" stroke="#e08850" stroke-width="1"/><path d="M2.2 2.6 H10 V10.2 H2.2 Z" fill="#f9e6d8" stroke="#e08850" stroke-width="1"/><path d="M.8 4.2 H8.4 V11.6 H.8 Z" fill="#eef4fb" stroke="#e08850" stroke-width="1"/><path d="M2.2 6.2 H7 M2.2 8 H7 M2.2 9.8 H7" stroke="#4a8ad0" stroke-width="1.1"/></svg>
<svg style="left:631.4px;top:359px" width="12.8" height="12.4" viewBox="0 0 12.8 12.4"><rect x=".6" y=".6" width="11.6" height="11.2" fill="#fdf6f1" stroke="#e8b89a" stroke-width="1"/><path d="M3.4 2 V10.4 M6.4 2 V10.4 M9.4 2 V10.4" stroke="#2f6bb5" stroke-width="1.9"/></svg>
<svg style="left:660.4px;top:359px" width="14" height="12.6" viewBox="0 0 14 12.6"><path d="M.6 3.8 H13.2 L8.4 8.2 V12 L5.4 10.6 V8.2 Z" fill="#2f80d2"/><circle cx="4" cy="1.6" r="1.1" fill="#e0702c"/><circle cx="7" cy="1.4" r="1.1" fill="#6fb44a"/><circle cx="10" cy="1.6" r="1.1" fill="#e0702c"/></svg>
<svg style="left:689.4px;top:359.8px" width="12" height="12" viewBox="0 0 12 12"><rect x=".6" y=".6" width="10.8" height="10.8" fill="#fdfdfd" stroke="#4a5058" stroke-width="1.1"/><path d="M2.4 3.2 H9.6 M2.4 8.8 H9.6" stroke="#e0702c" stroke-width="1"/><rect x="2.4" y="4.8" width="2.2" height="2.6" fill="#e0702c"/><path d="M5.6 6 H9.6" stroke="#c9855c" stroke-width=".9"/></svg>
<svg style="left:554.8px;top:393.5px" width="11" height="11" viewBox="0 0 11 11"><defs><linearGradient id="bg393" x1="0" y1="0" x2="1" y2="0"><stop offset="0" stop-color="#f2f3f4"/><stop offset="1" stop-color="#b9bcc0"/></linearGradient></defs><rect x=".4" y=".4" width="10.2" height="10.2" fill="url(#bg393)" stroke="#c4c7cb" stroke-width=".7"/><path d="M4.2 1.4 V9.6" stroke="#55595f" stroke-width="2.2"/><path d="M7.6 1.4 V9.6" stroke="#5d6167" stroke-width="1.9"/><path d="M2 1.4 V9.6" stroke="#9ea2a7" stroke-width=".9"/></svg>
<svg style="left:554.8px;top:408.3px" width="11" height="11" viewBox="0 0 11 11"><defs><linearGradient id="bg408" x1="0" y1="0" x2="1" y2="0"><stop offset="0" stop-color="#f2f3f4"/><stop offset="1" stop-color="#b9bcc0"/></linearGradient></defs><rect x=".4" y=".4" width="10.2" height="10.2" fill="url(#bg408)" stroke="#c4c7cb" stroke-width=".7"/><path d="M4.2 1.4 V9.6" stroke="#55595f" stroke-width="2.2"/><path d="M7.6 1.4 V9.6" stroke="#5d6167" stroke-width="1.9"/><path d="M2 1.4 V9.6" stroke="#9ea2a7" stroke-width=".9"/></svg>
</body>
</html>
